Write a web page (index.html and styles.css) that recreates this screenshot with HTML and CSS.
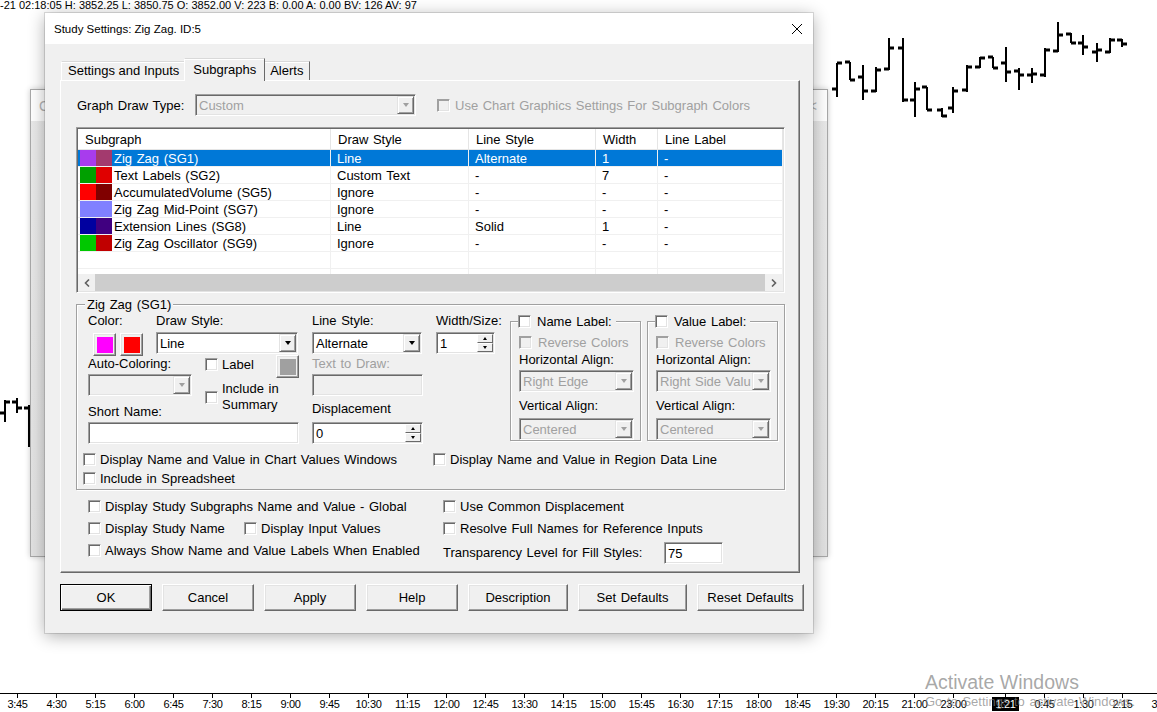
FILE: index.html
```html
<!DOCTYPE html>
<html lang="en">
<head>
  <meta charset="UTF-8">
  <title>Study Settings: Zig Zag</title>
  <link rel="stylesheet" href="styles.css">
</head>
<body>
  <!-- price bars behind the windows -->
  <svg class="chart" width="1157" height="712" viewBox="0 0 1157 712">
    <path stroke="#000" stroke-width="2" fill="none" d="M837 63V97M850 62V80M863 65V100M876 67V92M889 38V70M903 38V102M915 82V117M927 87V110M942 108V117M953 87V113M967 65V92M980 57V68M993 57V68M1006 47V82M1019 68V90M1032 68V83M1045 48V77M1058 22V52M1071 33V43M1083 35V55M1097 43V62M1110 38V53M1122 39V47M5 400V422M17 398V413M29 405V447"/>
    <path stroke="#000" stroke-width="3" fill="none" d="M832 89H837M837 63H842M845 62H850M850 80H855M858 77H863M863 91H868M871 91H876M876 70H881M884 69H889M889 48H894M898 48H903M903 100H908M910 100H915M915 89H920M922 87H927M927 110H932M937 110H942M942 116H947M948 108H953M953 91H958M962 90H967M967 67H972M975 67H980M980 58H985M988 57H993M993 68H998M1001 63H1006M1006 72H1011M1014 71H1019M1019 75H1024M1027 75H1032M1032 74H1037M1040 75H1045M1045 50H1050M1053 51H1058M1058 35H1063M1066 34H1071M1071 43H1076M1078 43H1083M1083 47H1088M1092 52H1097M1097 50H1102M1105 52H1110M1110 40H1115M1117 40H1122M1122 44H1127M0 413H5M5 402H10M12 402H17M17 408H22M24 408H29"/>
  </svg>

  <div class="status">-21 02:18:05 H: 3852.25 L: 3850.75 O: 3852.00 V: 223 B: 0.00 A: 0.00 BV: 126 AV: 97</div>

  <div class="time-axis">
    <span>3:45</span><span>4:30</span><span>5:15</span><span>6:00</span><span>6:45</span>
    <span>7:30</span><span>8:15</span><span>9:00</span><span>9:45</span><span>10:30</span>
    <span>11:15</span><span>12:00</span><span>12:45</span><span>13:30</span><span>14:15</span>
    <span>15:00</span><span>15:45</span><span>16:30</span><span>17:15</span><span>18:00</span>
    <span>18:45</span><span>19:30</span><span>20:15</span><span>21:00</span><span>23:00</span>
    <i class="gap"></i>
    <span class="cursor"><b>1:21</b></span><span>0:45</span><span>1:30</span><span>2:15</span><span>3:00</span>
  </div>

  <div class="back-window">
    <div class="back-title"><span>C</span><span>&lt;</span></div>
  </div>

  <div class="dialog">
    <div class="dialog-title">
      <span>Study Settings: Zig Zag. ID:5</span>
      <span class="close">
        <svg width="10" height="10" viewBox="0 0 10 10"><path d="M0 0L10 10M10 0L0 10" stroke="#000" stroke-width="1"/></svg>
      </span>
    </div>

    <div class="dialog-body">
      <div class="tabs">
        <div class="tab">Settings and Inputs</div>
        <div class="tab active">Subgraphs</div>
        <div class="tab">Alerts</div>
      </div>

      <div class="panel">
        <div class="graph-row">
          <span class="graph-label">Graph Draw Type:</span>
          <div class="field combo disabled graph-combo"><span class="text">Custom</span><span class="arrow"></span></div>
          <label class="check disabled use-chart"><span class="cb"></span>Use Chart Graphics Settings For Subgraph Colors</label>
        </div>

        <div class="list">
          <div class="list-head">
            <div>Subgraph</div><div>Draw Style</div><div>Line Style</div><div>Width</div><div>Line Label</div>
          </div>
          <div class="list-body">
            <div class="list-row selected">
              <div class="name"><i class="sw sel-magenta"></i><i class="sw sel-red"></i><span>Zig Zag (SG1)</span></div>
              <div>Line</div><div>Alternate</div><div>1</div><div>-</div>
            </div>
            <div class="list-row">
              <div class="name"><i class="sw c-green"></i><i class="sw c-red2"></i><span>Text Labels (SG2)</span></div>
              <div>Custom Text</div><div>-</div><div>7</div><div>-</div>
            </div>
            <div class="list-row">
              <div class="name"><i class="sw c-red"></i><i class="sw c-maroon"></i><span>AccumulatedVolume (SG5)</span></div>
              <div>Ignore</div><div>-</div><div>-</div><div>-</div>
            </div>
            <div class="list-row">
              <div class="name"><i class="sw wide c-lavender"></i><span>Zig Zag Mid-Point (SG7)</span></div>
              <div>Ignore</div><div>-</div><div>-</div><div>-</div>
            </div>
            <div class="list-row">
              <div class="name"><i class="sw c-navy"></i><i class="sw c-indigo"></i><span>Extension Lines (SG8)</span></div>
              <div>Line</div><div>Solid</div><div>1</div><div>-</div>
            </div>
            <div class="list-row">
              <div class="name"><i class="sw c-lime"></i><i class="sw c-crimson"></i><span>Zig Zag Oscillator (SG9)</span></div>
              <div>Ignore</div><div>-</div><div>-</div><div>-</div>
            </div>
            <div class="list-row"><div></div><div></div><div></div><div></div><div></div></div>
            <div class="list-row"><div></div><div></div><div></div><div></div><div></div></div>
          </div>
          <div class="hscroll">
            <span class="sb-btn"><svg width="6" height="8" viewBox="0 0 6 8"><path d="M5 0.5L1.5 4L5 7.5" stroke="#606060" stroke-width="1.6" fill="none"/></svg></span>
            <span class="sb-thumb"></span>
            <span class="sb-btn right"><svg width="6" height="8" viewBox="0 0 6 8"><path d="M1 0.5L4.5 4L1 7.5" stroke="#606060" stroke-width="1.6" fill="none"/></svg></span>
          </div>
        </div>

        <fieldset class="group">
          <legend>Zig Zag (SG1)</legend>
          <div class="group-cols">
            <div class="col-a">
              <div class="row-a1">
                <div class="color-col">
                  <div class="lbl">Color:</div>
                  <div class="color-btns">
                    <span class="color-btn"><i class="c-magenta"></i></span>
                    <span class="color-btn"><i class="c-red"></i></span>
                  </div>
                </div>
                <div class="draw-col">
                  <div class="lbl">Draw Style:</div>
                  <div class="field combo w-draw"><span class="text">Line</span><span class="arrow"></span></div>
                </div>
              </div>
              <div class="row-a2">
                <div class="auto-col">
                  <div class="lbl">Auto-Coloring:</div>
                  <div class="field combo disabled w-auto"><span class="arrow"></span></div>
                </div>
                <div class="label-col">
                  <div class="label-row">
                    <label class="check"><span class="cb"></span>Label</label>
                    <span class="color-btn"><i class="c-gray"></i></span>
                  </div>
                  <label class="check multi"><span class="cb"></span><span>Include in<br>Summary</span></label>
                </div>
              </div>
              <div class="lbl">Short Name:</div>
              <div class="field w-short"></div>
            </div>

            <div class="col-b">
              <div class="lbl">Line Style:</div>
              <div class="field combo w-line"><span class="text">Alternate</span><span class="arrow"></span></div>
              <div class="lbl muted text-draw">Text to Draw:</div>
              <div class="field disabled w-text"></div>
              <div class="lbl displacement">Displacement</div>
              <div class="field spin w-disp"><span class="text">0</span><span class="spin-btns"><span class="up"></span><span class="down"></span></span></div>
            </div>

            <div class="col-c">
              <div class="lbl">Width/Size:</div>
              <div class="field spin w-size"><span class="text">1</span><span class="spin-btns"><span class="up"></span><span class="down"></span></span></div>
            </div>

            <fieldset class="sub-group">
              <legend><label class="check"><span class="cb"></span>Name Label:</label></legend>
              <label class="check disabled reverse"><span class="cb"></span>Reverse Colors</label>
              <div class="lbl h-align">Horizontal Align:</div>
              <div class="field combo disabled w-align"><span class="text">Right Edge</span><span class="arrow"></span></div>
              <div class="lbl v-align">Vertical Align:</div>
              <div class="field combo disabled w-align v-combo"><span class="text">Centered</span><span class="arrow"></span></div>
            </fieldset>

            <fieldset class="sub-group value-group">
              <legend><label class="check"><span class="cb"></span>Value Label:</label></legend>
              <label class="check disabled reverse"><span class="cb"></span>Reverse Colors</label>
              <div class="lbl h-align">Horizontal Align:</div>
              <div class="field combo disabled w-align"><span class="text">Right Side Valu</span><span class="arrow"></span></div>
              <div class="lbl v-align">Vertical Align:</div>
              <div class="field combo disabled w-align v-combo"><span class="text">Centered</span><span class="arrow"></span></div>
            </fieldset>
          </div>

          <div class="group-checks">
            <label class="check"><span class="cb"></span>Display Name and Value in Chart Values Windows</label>
            <label class="check"><span class="cb"></span>Display Name and Value in Region Data Line</label>
            <label class="check"><span class="cb"></span>Include in Spreadsheet</label>
          </div>
        </fieldset>

        <div class="options">
          <label class="check"><span class="cb"></span>Display Study Subgraphs Name and Value - Global</label>
          <label class="check"><span class="cb"></span>Use Common Displacement</label>
          <div class="pair">
            <label class="check study-name"><span class="cb"></span>Display Study Name</label>
            <label class="check"><span class="cb"></span>Display Input Values</label>
          </div>
          <label class="check"><span class="cb"></span>Resolve Full Names for Reference Inputs</label>
          <label class="check top"><span class="cb"></span>Always Show Name and Value Labels When Enabled</label>
          <div class="transparency">
            <span class="transparency-label">Transparency Level for Fill Styles:</span>
            <div class="field w-trans"><span class="text">75</span></div>
          </div>
        </div>
      </div>

      <div class="buttons">
        <div class="btn default w-ok">OK</div>
        <div class="btn w-ok">Cancel</div>
        <div class="btn w-ok">Apply</div>
        <div class="btn w-ok">Help</div>
        <div class="btn w-desc">Description</div>
        <div class="btn w-set">Set Defaults</div>
        <div class="btn w-reset">Reset Defaults</div>
      </div>
    </div>
  </div>

  <div class="watermark">
    <div class="wm-big">Activate Windows</div>
    <div class="wm-small">Go to Settings to activate Windows.</div>
  </div>
</body>
</html>
```

FILE: styles.css
```css
* {
  box-sizing: border-box;
}

body {
  margin: 0;
  width: 1157px;
  height: 712px;
  overflow: hidden;
  position: relative;
  background: #fff;
  font-family: "Liberation Sans", Arial, sans-serif;
  font-size: 13px;
  color: #000;
}

/* chart canvas */
.chart {
  position: absolute;
  left: 0;
  top: 0;
}
.status {
  position: absolute;
  left: 0;
  top: 0;
  font-size: 11px;
  line-height: 11px;
  white-space: nowrap;
}
.time-axis {
  position: absolute;
  left: -2px;
  top: 693px;
  width: 1160px;
  height: 19px;
  border-top: 1px solid #000;
  display: flex;
  font-size: 11px;
  letter-spacing: -0.3px;
}
.time-axis span {
  flex: none;
  width: 39px;
  position: relative;
  text-align: center;
  line-height: 14px;
  padding-top: 3px;
  white-space: nowrap;
}
.time-axis span::before {
  content: "";
  position: absolute;
  left: 19px;
  top: 0;
  width: 1px;
  height: 4px;
  background: #000;
}
.time-axis .gap {
  flex: none;
  width: 13px;
}
.time-axis .cursor b {
  font-weight: normal;
  background: #000;
  color: #fff;
  padding: 1px 3px;
}
.watermark {
  position: absolute;
  left: 925px;
  top: 671px;
  color: rgba(130, 130, 130, 0.7);
  white-space: nowrap;
}
.wm-big {
  font-size: 19.5px;
  line-height: 23px;
}
.wm-small {
  font-size: 13px;
  line-height: 15px;
  word-spacing: 1px;
}

/* window behind the dialog */
.back-window {
  position: absolute;
  left: 30px;
  top: 89px;
  width: 798px;
  height: 468px;
  background: linear-gradient(#eaeaea, #e2e2e2);
  border: 1px solid #a8a8a8;
  box-shadow: 0 0 6px rgba(0, 0, 0, 0.2);
}
.back-title {
  height: 31px;
  background: #fff;
  display: flex;
  justify-content: space-between;
  align-items: center;
  padding: 0 10px 0 8px;
  color: #b4b4b4;
  font-size: 14px;
}

/* dialog */
.dialog {
  position: absolute;
  left: 45px;
  top: 13px;
  width: 768px;
  height: 620px;
  background: #f0f0f0;
  box-shadow: 0 0 0 1px rgba(0, 0, 0, 0.12), 0 3px 16px rgba(0, 0, 0, 0.32);
}
.dialog-title {
  height: 31px;
  background: #fff;
  display: flex;
  align-items: center;
  justify-content: space-between;
  padding-left: 9px;
  font-size: 11.5px;
}
.close {
  width: 32px;
  height: 31px;
  display: flex;
  align-items: center;
  justify-content: center;
}
.dialog-body {
  padding: 14px 0 0 15px;
  word-spacing: 1px;
}

.tabs {
  display: flex;
  align-items: flex-end;
  height: 22px;
  padding-left: 1px;
}
.tab {
  height: 19px;
  padding: 0 6px;
  line-height: 18px;
  background: #f0f0f0;
  border: 1px solid;
  border-color: #d9d9d9 #696969 transparent #fff;
  border-bottom: none;
  box-shadow: inset 0 1px #fff;
  word-spacing: 0;
}
.tab.active {
  position: relative;
  z-index: 1;
  height: 23px;
  margin: 0 -2px -1px;
  padding: 0 8px;
  line-height: 21px;
}

.panel {
  width: 740px;
  height: 493px;
  border: 1px solid;
  border-color: #fff #696969 #696969 #fff;
  box-shadow: inset -1px -1px #a0a0a0;
  padding: 13px 14px 0 15px;
}

/* shared controls */
.lbl {
  height: 15px;
  line-height: 15px;
  white-space: nowrap;
}
.muted {
  color: #a0a0a0;
}
.field {
  height: 22px;
  padding: 1px;
  display: flex;
  align-items: center;
  background: #fff;
  border: 1px solid;
  border-color: #a0a0a0 #fff #fff #a0a0a0;
  box-shadow: inset 1px 1px #696969, inset -1px -1px #e3e3e3;
  white-space: nowrap;
  overflow: hidden;
}
.field .text {
  flex: 1;
  padding-left: 2px;
  overflow: hidden;
}
.field.disabled {
  background: #f0f0f0;
  color: #a0a0a0;
}
.combo .arrow {
  flex: none;
  margin-left: auto;
  width: 17px;
  height: 18px;
  background: #f0f0f0;
  border: 1px solid;
  border-color: #e3e3e3 #696969 #696969 #e3e3e3;
  box-shadow: inset 1px 1px #fff, inset -1px -1px #a0a0a0;
  display: flex;
  align-items: center;
  justify-content: center;
}
.combo .arrow::after {
  content: "";
  border-left: 3.5px solid transparent;
  border-right: 3.5px solid transparent;
  border-top: 4px solid #000;
}
.combo.disabled .arrow::after {
  border-top-color: #a0a0a0;
}
.spin-btns {
  flex: none;
  margin-left: auto;
  width: 16px;
  height: 18px;
  display: flex;
  flex-direction: column;
}
.spin-btns span {
  flex: 1;
  background: #f0f0f0;
  border: 1px solid;
  border-color: #fff #696969 #696969 #fff;
  display: flex;
  align-items: center;
  justify-content: center;
}
.spin-btns .up::after {
  content: "";
  border-left: 2.5px solid transparent;
  border-right: 2.5px solid transparent;
  border-bottom: 3px solid #000;
}
.spin-btns .down::after {
  content: "";
  border-left: 2.5px solid transparent;
  border-right: 2.5px solid transparent;
  border-top: 3px solid #000;
}

.check {
  display: flex;
  align-items: center;
  gap: 4px;
  white-space: nowrap;
}
.cb {
  flex: none;
  width: 13px;
  height: 13px;
  background: #fff;
  border: 1px solid;
  border-color: #a0a0a0 #fff #fff #a0a0a0;
  box-shadow: inset 1px 1px #696969, inset -1px -1px #e3e3e3;
}
.check.disabled {
  color: #a0a0a0;
}
.check.disabled .cb {
  background: #f0f0f0;
  box-shadow: inset 1px 1px #a0a0a0, inset -1px -1px #e3e3e3;
}

.color-btn {
  flex: none;
  width: 23px;
  height: 23px;
  background: #f0f0f0;
  border: 1px solid;
  border-color: #fff #696969 #696969 #fff;
  box-shadow: inset -1px -1px #a0a0a0, inset 1px 1px #e3e3e3;
  display: flex;
  align-items: center;
  justify-content: center;
}
.color-btn i {
  width: 16px;
  height: 16px;
}

/* colours */
.c-magenta { background: #ff00ff; }
.c-red { background: #ff0000; }
.c-red2 { background: #e00000; }
.c-maroon { background: #800000; }
.c-green { background: #00a000; }
.c-lavender { background: #8080ff; }
.c-navy { background: #0000a0; }
.c-indigo { background: #400080; }
.c-lime { background: #00c800; }
.c-crimson { background: #c00000; }
.c-gray { background: #a0a0a0; }
.sel-magenta { background: #a83ced; }
.sel-red { background: #a33a6e; }

/* graph draw type row */
.graph-row {
  display: flex;
  align-items: center;
  height: 22px;
}
.graph-label {
  width: 119px;
  padding-left: 1px;
}
.graph-combo {
  width: 221px;
}
.use-chart {
  margin-left: 21px;
  gap: 5px;
}

/* subgraph list */
.list {
  margin-top: 11px;
  height: 166px;
  padding: 1px;
  background: #fff;
  border: 1px solid;
  border-color: #a0a0a0 #fff #fff #a0a0a0;
  box-shadow: inset 1px 1px #696969, inset -1px -1px #e3e3e3;
  display: flex;
  flex-direction: column;
}
.list-head,
.list-row {
  display: grid;
  grid-template-columns: 253px 138px 127px 62px 125px;
}
.list-head div {
  height: 21px;
  line-height: 21px;
  padding-left: 7px;
  border-right: 1px solid #e5e5e5;
  border-bottom: 1px solid #e5e5e5;
}
.list-body {
  height: 124px;
  overflow: hidden;
}
.list-row div {
  height: 17px;
  line-height: 17px;
  padding-left: 6px;
  border-right: 1px solid #f0f0f0;
  border-bottom: 1px solid #f0f0f0;
  white-space: nowrap;
}
.list-row .name {
  display: flex;
  padding-left: 2px;
}
.list-row .name span {
  margin-left: 2px;
}
.sw {
  flex: none;
  width: 16px;
  height: 16px;
}
.sw.wide {
  width: 32px;
}
.list-row.selected {
  background: #0078d7;
  color: #fff;
}
.hscroll {
  height: 17px;
  display: flex;
  background: #f0f0f0;
}
.sb-btn {
  width: 17px;
  display: flex;
  align-items: center;
  justify-content: center;
}
.sb-btn.right {
  width: 18px;
}
.sb-thumb {
  flex: 1;
  background: #cdcdcd;
}

/* Zig Zag (SG1) group */
.group,
.sub-group {
  margin: 4px 0 0;
  padding: 1px 0 1px 11px;
  min-width: 0;
  border: 1px solid #a0a0a0;
  box-shadow: inset 1px 1px #fff, 1px 1px #fff;
}
.group legend,
.sub-group legend {
  line-height: 15px;
  padding: 0 2px;
  margin-left: -3px;
  background: #f0f0f0;
}
.group-cols {
  display: flex;
  align-items: flex-start;
}
.col-a {
  width: 211px;
  margin-right: 13px;
}
.row-a1 {
  display: flex;
  height: 42px;
}
.color-col {
  width: 68px;
}
.color-btns {
  display: flex;
  gap: 4px;
  margin: 5px 0 0 5px;
}
.draw-col .field {
  margin-top: 4px;
}
.w-draw {
  width: 142px;
}
.row-a2 {
  display: flex;
  height: 49px;
}
.auto-col {
  width: 117px;
}
.auto-col .lbl {
  margin-top: 1px;
}
.w-auto {
  width: 104px;
  margin-top: 3px;
}
.label-col {
  width: 94px;
}
.label-row {
  display: flex;
  align-items: flex-start;
  justify-content: space-between;
}
.label-row .check {
  margin-top: 2px;
  line-height: 15px;
}
.check.multi {
  margin-top: 3px;
  line-height: 16px;
}
.w-short {
  width: 211px;
  margin-top: 3px;
}
.col-b {
  width: 111px;
  margin-right: 13px;
}
.w-line {
  width: 110px;
  margin-top: 4px;
}
.text-draw {
  margin-top: 2px;
}
.w-text {
  width: 111px;
  margin-top: 3px;
}
.displacement {
  margin-top: 5px;
}
.w-disp {
  width: 111px;
  margin-top: 6px;
}
.col-c {
  width: 58px;
  margin-right: 16px;
}
.w-size {
  width: 59px;
  margin-top: 4px;
}
.sub-group {
  width: 131px;
  margin-top: 1px;
  padding: 0 0 0 8px;
  flex: none;
}
.sub-group legend {
  margin-left: -1px;
  padding: 0 4px 0 0;
}
.sub-group legend .check {
  gap: 6px;
}
.value-group {
  margin-left: 6px;
}
.reverse {
  margin-top: 6px;
  line-height: 15px;
  gap: 6px;
}
.h-align {
  margin-top: 2px;
}
.w-align {
  width: 115px;
  margin-top: 3px;
}
.v-align {
  margin-top: 6px;
}
.v-combo {
  margin-top: 5px;
}
.group-checks {
  display: grid;
  grid-template-columns: 350px auto;
  grid-auto-rows: 19px;
  margin: 6px 0 0 -5px;
}

/* bottom options */
.options {
  display: grid;
  grid-template-columns: 355px auto;
  grid-template-rows: 22px 22px 25px;
  margin: 5px 0 0 12px;
}
.options .check {
  height: 22px;
}
.pair {
  display: flex;
}
.study-name {
  width: 156px;
}
.transparency {
  display: flex;
  align-items: flex-end;
}
.transparency-label {
  width: 221px;
  line-height: 22px;
}
.w-trans {
  width: 59px;
}

/* dialog buttons */
.buttons {
  display: flex;
  gap: 10px;
  margin-top: 11px;
}
.btn {
  height: 27px;
  background: #f0f0f0;
  border: 1px solid;
  border-color: #fff #696969 #696969 #fff;
  box-shadow: inset -1px -1px #a0a0a0, inset 1px 1px #e3e3e3;
  display: flex;
  align-items: center;
  justify-content: center;
}
.btn.default {
  border-color: #000;
  box-shadow: inset 1px 1px #fff, inset -1px -1px #696969, inset -2px -2px #a0a0a0;
}
.w-ok { width: 92px; }
.w-desc { width: 100px; }
.w-set { width: 109px; }
.w-reset { width: 107px; }
```
